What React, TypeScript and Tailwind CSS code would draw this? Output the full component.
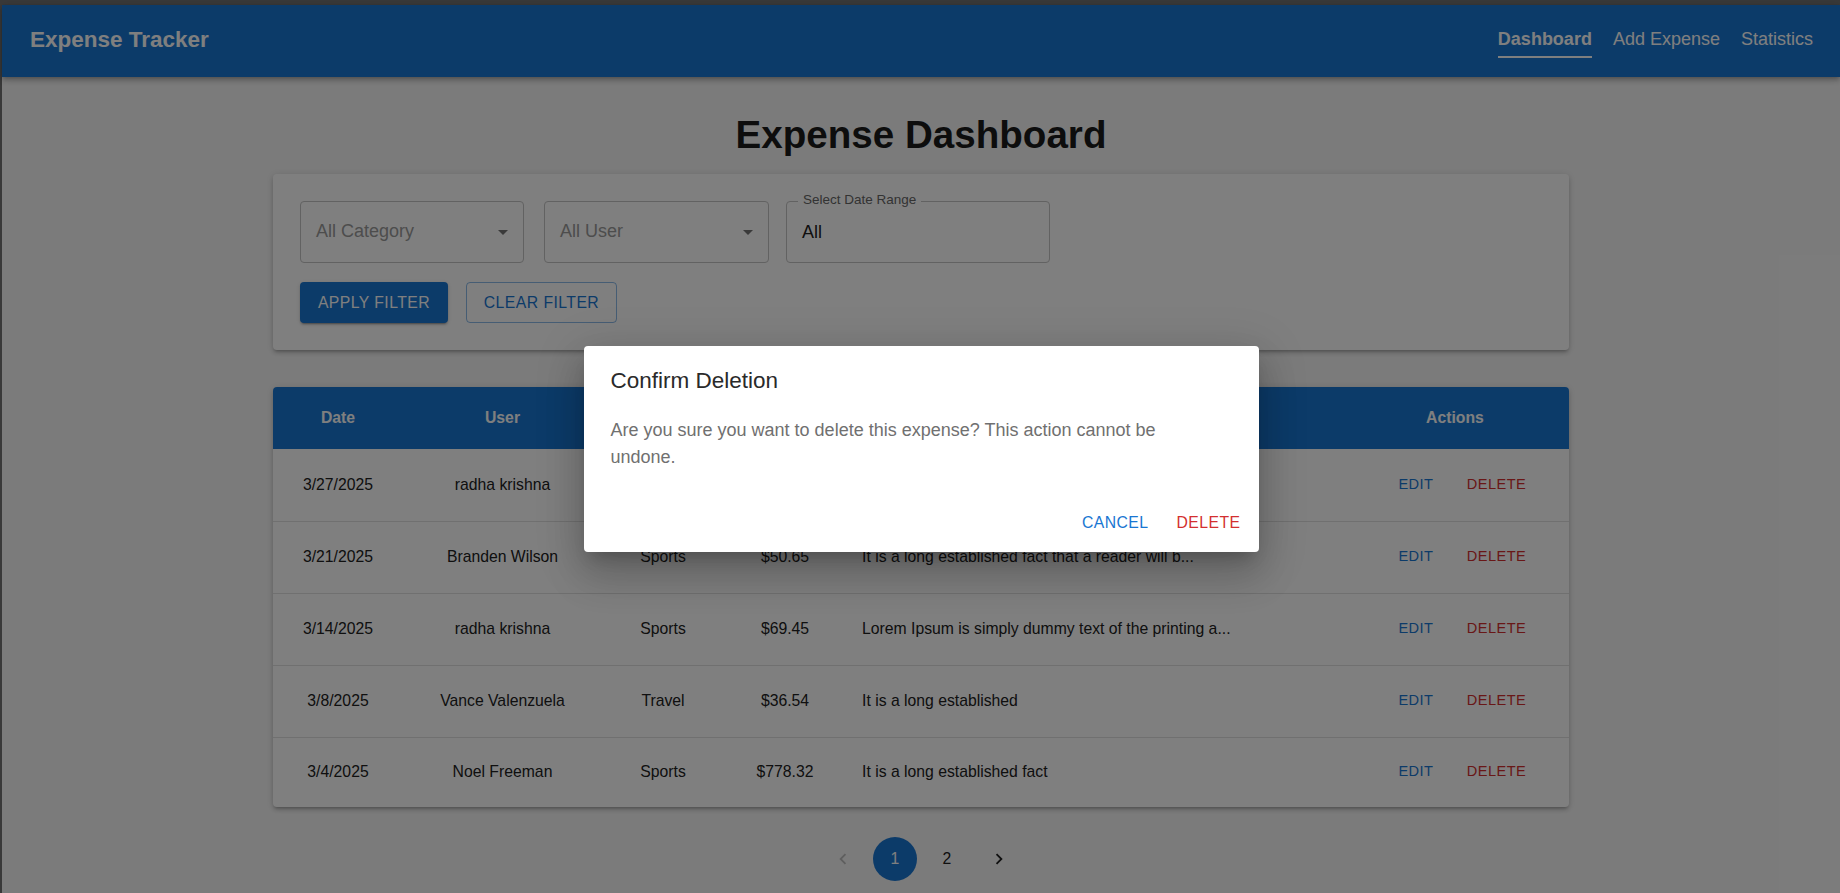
import React from 'react';

const rows = [
  { date: '3/27/2025', user: 'radha krishna', category: 'Sports', amount: '$12.00', desc: 'Lorem Ipsum is simply dummy text' },
  { date: '3/21/2025', user: 'Branden Wilson', category: 'Sports', amount: '$50.65', desc: 'It is a long established fact that a reader will b...' },
  { date: '3/14/2025', user: 'radha krishna', category: 'Sports', amount: '$69.45', desc: 'Lorem Ipsum is simply dummy text of the printing a...' },
  { date: '3/8/2025', user: 'Vance Valenzuela', category: 'Travel', amount: '$36.54', desc: 'It is a long established' },
  { date: '3/4/2025', user: 'Noel Freeman', category: 'Sports', amount: '$778.32', desc: 'It is a long established fact' }];

const paperShadow =
  'shadow-[0px_3px_3px_-2px_rgba(0,0,0,0.2),0px_3px_4px_0px_rgba(0,0,0,0.14),0px_1px_8px_0px_rgba(0,0,0,0.12)]';

function DropArrow() {
  return (
    <svg viewBox="0 0 24 24" className="w-6 h-6 fill-[#757575]">
      <path d="M7 10l5 5 5-5z" />
    </svg>);

}

function SelectBox({ label, width }: {label: string;width: string;}) {
  return (
    <div className={`${width} h-[62px] flex items-center justify-between rounded border border-[#c4c4c4] pl-[15px] pr-[8px]`}>
      <span className="text-[18px] text-[#9a9a9a] -translate-y-[1px]">{label}</span>
      <DropArrow />
    </div>);

}

function Chevron({ dir, className }: {dir: 'left' | 'right';className: string;}) {
  return (
    <svg viewBox="0 0 24 24" className={className}>
      {dir === 'left' ?
      <path d="M15.41 7.41 14 6l-6 6 6 6 1.41-1.41L10.83 12z" /> :
      <path d="M10 6 8.59 7.41 13.17 12l-4.58 4.59L10 18l6-6z" />}
    </svg>);

}

export default function App() {
  return (
    <div className="h-[893px] overflow-hidden bg-[#393939] pt-[5px] pl-[2px] font-['Liberation_Sans',Arial,sans-serif]">
      <div className="relative h-full bg-[#f7f7f7]">
        {/* app bar */}
        <header className="h-[72px] bg-[#1976d2] flex items-center justify-between pl-[28px] pr-[27px] pb-[3px] shadow-[0px_2px_4px_-1px_rgba(0,0,0,0.2),0px_4px_5px_0px_rgba(0,0,0,0.14),0px_1px_10px_0px_rgba(0,0,0,0.12)]">
          <h1 className="text-[22.5px] font-bold text-white">Expense Tracker</h1>
          <nav className="mt-[4px] flex items-start gap-[21px] text-[18px] text-white">
            <a className="font-bold border-b-2 border-white pb-[3px] leading-[27px]">Dashboard</a>
            <a className="border-b-2 border-transparent pb-[3px] leading-[27px]">Add Expense</a>
            <a className="border-b-2 border-transparent pb-[3px] leading-[27px]">Statistics</a>
          </nav>
        </header>

        <main className="w-[1296px] mx-auto">
          <h2 className="mt-[34px] text-center text-[38.6px] leading-[47px] font-bold text-[#1a1a1a]">
            Expense Dashboard
          </h2>

          {/* filters */}
          <section className={`mt-[16px] bg-white rounded ${paperShadow} p-[27px] h-[176px]`}>
            <div className="flex items-center">
              <SelectBox label="All Category" width="w-[224px]" />
              <div className="ml-[20px]">
                <SelectBox label="All User" width="w-[225px]" />
              </div>
              <div className="relative ml-[17px] w-[264px] h-[62px] rounded border border-[#c4c4c4] flex items-center pl-[15px]">
                <span className="absolute left-[11px] top-[-2px] -translate-y-1/2 bg-white px-[5px] text-[13.5px] leading-none text-[#666]">
                  Select Date Range
                </span>
                <span className="text-[18px] text-[#212121]">All</span>
              </div>
            </div>
            <div className="mt-[19px] flex gap-[18px]">
              <button className="w-[148px] h-[41px] rounded bg-[#1976d2] text-white text-[15.75px] tracking-[0.45px] uppercase shadow-[0px_3px_1px_-2px_rgba(0,0,0,0.2),0px_2px_2px_0px_rgba(0,0,0,0.14),0px_1px_5px_0px_rgba(0,0,0,0.12)]">
                Apply Filter
              </button>
              <button className="w-[151px] h-[41px] rounded border border-[#1976d2]/50 text-[#1976d2] text-[15.75px] tracking-[0.45px] uppercase">
                Clear Filter
              </button>
            </div>
          </section>

          {/* table */}
          <section className={`mt-[37px] bg-white rounded overflow-hidden ${paperShadow}`}>
            <table className="w-full table-fixed border-collapse text-[15.75px]">
              <colgroup>
                <col className="w-[130px]" />
                <col className="w-[199px]" />
                <col className="w-[122px]" />
                <col className="w-[122px]" />
                <col className="w-[495px]" />
                <col className="w-[228px]" />
              </colgroup>
              <thead>
                <tr className="h-[62px] bg-[#1976d2] text-white font-bold">
                  <th className="text-center">Date</th>
                  <th className="text-center">User</th>
                  <th className="text-center">Category</th>
                  <th className="text-center">Amount</th>
                  <th className="text-left pl-4">Description</th>
                  <th className="text-center">Actions</th>
                </tr>
              </thead>
              <tbody className="text-[#212121]">
                {rows.map((r, i) =>
                <tr key={i} className={i === rows.length - 1 ? 'h-[70px]' : 'h-[72px] border-b border-[#e0e0e0]'}>
                    <td className="text-center">{r.date}</td>
                    <td className="text-center">{r.user}</td>
                    <td className="text-center">{r.category}</td>
                    <td className="text-center">{r.amount}</td>
                    <td className="text-left pl-4 whitespace-nowrap overflow-hidden">{r.desc}</td>
                    <td>
                      <div className="flex justify-center gap-[14px] pl-[5px] text-[14.6px] tracking-[0.42px]">
                        <button className="w-[64px] h-[32px] rounded text-[#1976d2]">EDIT</button>
                        <button className="px-[5px] h-[32px] rounded text-[#d32f2f]">DELETE</button>
                      </div>
                    </td>
                  </tr>
                )}
              </tbody>
            </table>
          </section>

          {/* pagination */}
          <nav className="mt-[30px] flex justify-center gap-[8px] text-[15.75px]">
            <span className="w-[44px] h-[44px] flex items-center justify-center">
              <Chevron dir="left" className="w-[22px] h-[22px] fill-[#bdbdbd]" />
            </span>
            <span className="w-[44px] h-[44px] rounded-full bg-[#1976d2] text-white flex items-center justify-center">1</span>
            <span className="w-[44px] h-[44px] rounded-full text-[#212121] flex items-center justify-center">2</span>
            <span className="w-[44px] h-[44px] flex items-center justify-center">
              <Chevron dir="right" className="w-[22px] h-[22px] fill-[#212121]" />
            </span>
          </nav>
        </main>

        {/* backdrop + dialog */}
        <div className="absolute inset-0 bg-black/50 flex items-center justify-center">
          <div className="w-[675px] bg-white rounded shadow-[0px_11px_15px_-7px_rgba(0,0,0,0.2),0px_24px_38px_3px_rgba(0,0,0,0.14),0px_9px_46px_8px_rgba(0,0,0,0.12)]">
            <h3 className="pt-[17px] px-[27px] text-[22.5px] leading-[36px] text-[#2a2a2a]">Confirm Deletion</h3>
            <p className="mt-[18px] px-[27px] w-[650px] text-[18px] leading-[27px] text-[#707070]">
              Are you sure you want to delete this expense? This action cannot be undone.
            </p>
            <div className="flex justify-end gap-[12px] pt-[32px] pr-[10px] pb-[9px] text-[15.75px] tracking-[0.45px]">
              <button className="h-[40px] px-[8px] rounded text-[#1976d2]">CANCEL</button>
              <button className="h-[40px] px-[8px] rounded text-[#d32f2f]">DELETE</button>
            </div>
          </div>
        </div>
      </div>
    </div>);

}
